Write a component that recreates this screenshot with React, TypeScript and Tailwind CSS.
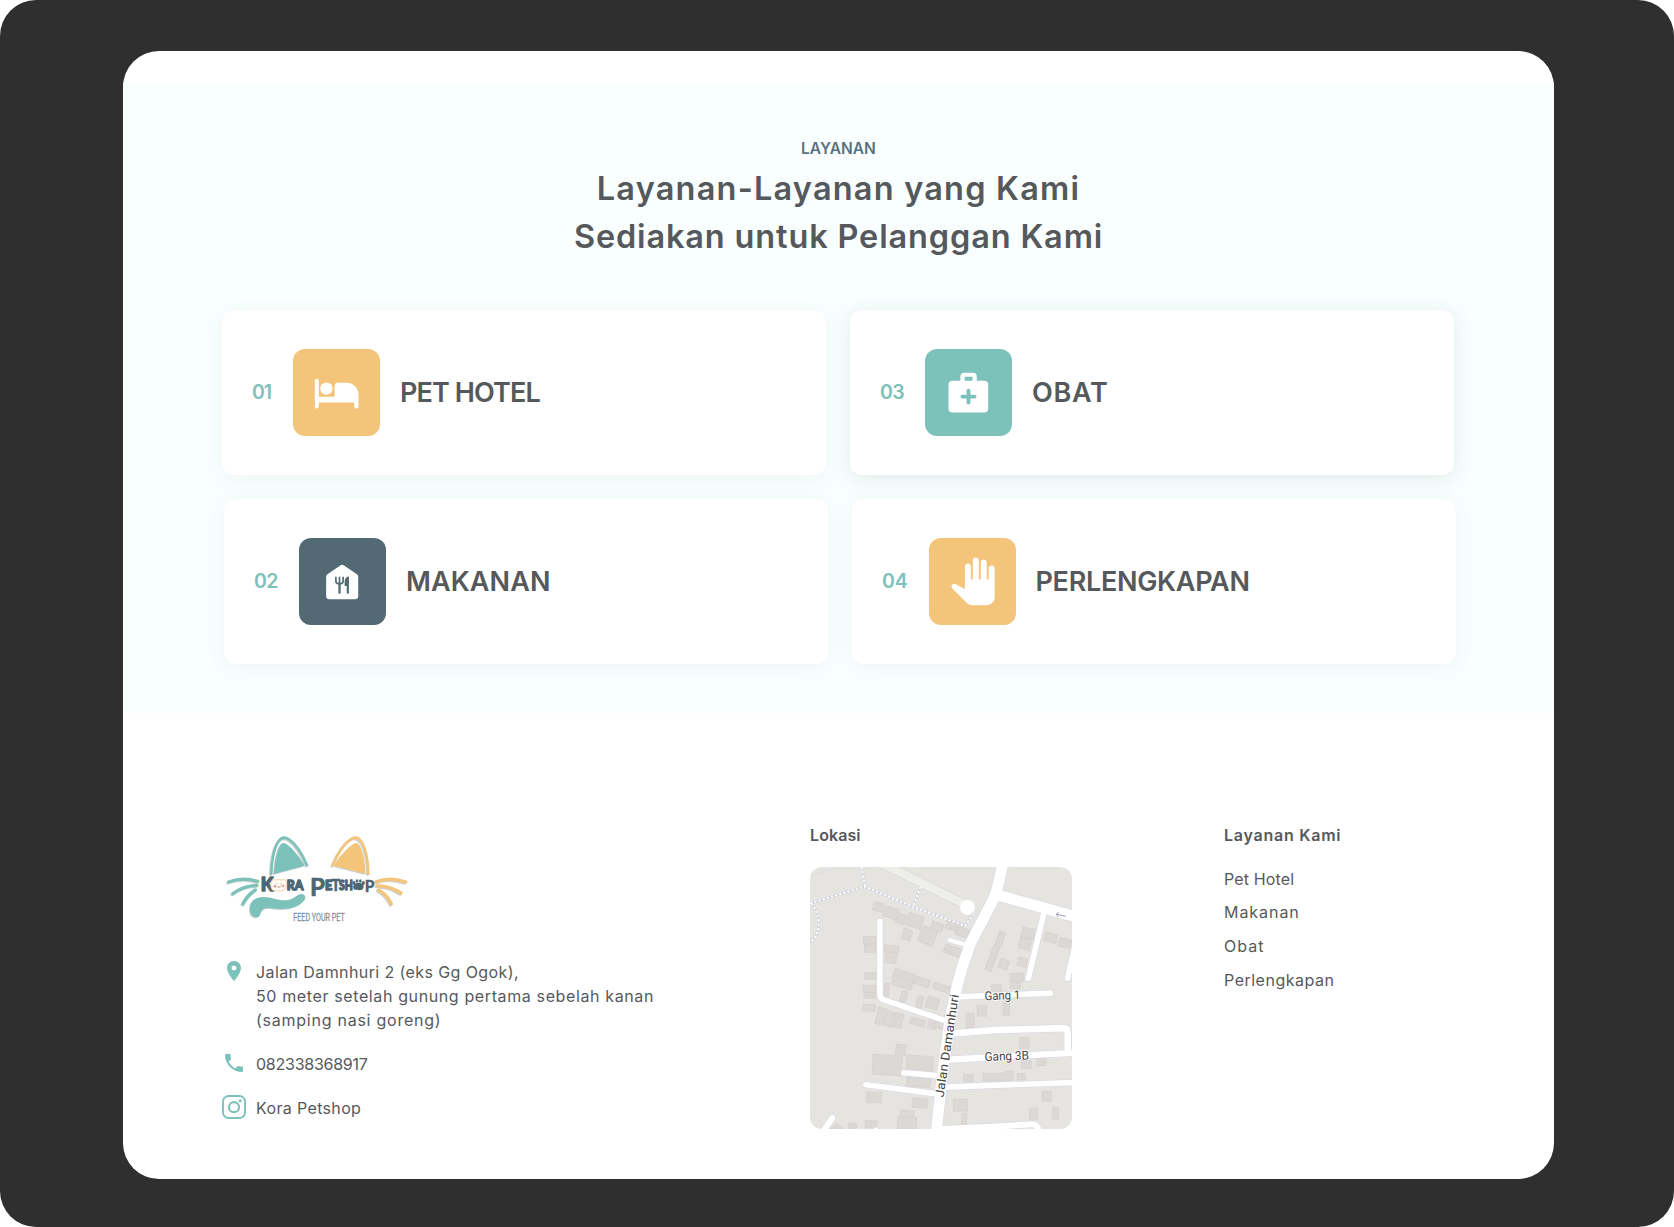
import type { ReactNode } from "react";
import { MdLocationOn, MdPhone } from "react-icons/md";

function BedIcon() {
  return (
    <svg viewBox="0 0 263 263" className="size-full fill-white">
      <circle cx="101" cy="120" r="18.5" />
      <path d="M66 96a6 6 0 0 1 12 0V144H126V112a10 10 0 0 1 10-10H162a36 36 0 0 1 36 36V174a6.5 6.5 0 0 1-13 0V162H78V174a6 6 0 0 1-12 0Z" />
    </svg>
  );
}

function MedicalIcon() {
  return (
    <svg viewBox="0 0 263 263" className="size-full">
      <path
        className="fill-white"
        fillRule="evenodd"
        d="M107 96V84a12 12 0 0 1 12-12H144.500a12 12 0 0 1 12 12V96H179a12 12 0 0 1 12 12V180a12 12 0 0 1-12 12H83a12 12 0 0 1-12-12V108a12 12 0 0 1 12-12ZM120 96H143.500V84H120Z"
      />
      <path d="M131.500 126V162M113.500 144H149.500" stroke="#7dc1bb" strokeWidth="12" strokeLinecap="round" />
    </svg>
  );
}

function FoodHouseIcon() {
  return (
    <svg viewBox="0 0 263 263" className="size-full">
      <path
        className="fill-white"
        d="M126 82.500Q130.500 79.500 135 82.500L174 109Q179 112.500 179 118V175Q179 185 169 185H92Q82 185 82 175V118Q82 112.500 87 109Z"
      />
      <g stroke="#536a75" fill="none" strokeLinecap="butt">
        <path d="M111.500 117V130Q111.500 138 119 138H126Q133.500 138 133.500 130V117M122.500 117V138" strokeWidth="5" />
        <path d="M122.500 136V168" strokeWidth="7" />
        <path d="M147.500 117V168" strokeWidth="6.500" />
      </g>
      <path d="M150 117V145H138V133Q138 118 150 117Z" fill="#536a75" />
    </svg>
  );
}

function HandIcon() {
  return (
    <svg viewBox="0 0 263 263" className="size-full fill-white">
      <path
        transform="translate(60.500 59) scale(6)"
        d="M23 5.500V20c0 2.200-1.800 4-4 4h-7.300c-1.080 0-2.100-.43-2.850-1.190L1.700 15.600c-.6-.7-.55-1.450 0-1.950.5-.45 1.100-.45 1.700-.2L8 15.910V4.500c0-.83.67-1.500 1.500-1.500S11 3.670 11 4.500v6.500h1V1.500c0-.83.67-1.500 1.500-1.500S15 .67 15 1.500V11h1V2.500c0-.83.67-1.500 1.500-1.500s1.500.67 1.500 1.500V11h1V5.500c0-.83.67-1.500 1.500-1.500s1.500.67 1.500 1.500z"
      />
    </svg>
  );
}

function InstagramIcon() {
  return (
    <svg viewBox="0 0 24 24" className="size-6 fill-none stroke-[#7dc1bb]">
      <rect x="1" y="1" width="22" height="22" rx="5.500" strokeWidth="1.900" />
      <circle cx="12" cy="12.200" r="5" strokeWidth="2.200" />
      <circle cx="18.200" cy="5.800" r="1.500" className="fill-[#7dc1bb] stroke-none" />
    </svg>
  );
}

function Logo() {
  return (
    <svg viewBox="0 0 630 345" className="h-[115px] w-[210px]">
      <defs>
        <filter id="soft" x="-10%" y="-10%" width="120%" height="120%">
          <feDropShadow dx="-3" dy="3" stdDeviation="1.500" floodColor="#8a9a9a" floodOpacity=".45" />
        </filter>
      </defs>
      <g filter="url(#soft)">
        <g stroke="#7dc1bb" strokeLinecap="round" fill="none">
          <path d="M184 161C184 125 192 84 206 64Q218 46 237 58C256 70 277 103 291 136" strokeWidth="8" />
          <path d="M56 186Q96 170 143 184" strokeWidth="10" />
          <path d="M69 221Q100 197 141 196" strokeWidth="10" />
          <path d="M99 252Q112 226 136 210" strokeWidth="10" />
        </g>
        <path d="M192 162C194 125 200 94 211 75Q218 64 230 73C251 88 271 114 284 137Z" fill="#7dc1bb" />
        <path
          d="M120 270C118 244 136 231 160 231C190 231 207 245 234 240C255 236 260 224 272 222C286 221 289 232 283 241C268 260 240 268 211 267C180 265 163 258 154 275C149 285 151 291 139 292C127 291 121 282 120 270Z"
          fill="#7dc1bb"
        />
        <g stroke="#f4c47a" strokeLinecap="round" fill="none">
          <path d="M475 161C475 125 467 84 453 64Q441 46 422 58C403 70 382 103 368 136" strokeWidth="8" />
          <path d="M500 185Q540 170 587 186" strokeWidth="10" />
          <path d="M502 197Q542 199 573 219" strokeWidth="10" />
          <path d="M506 210Q532 225 544 252" strokeWidth="10" />
        </g>
        <path d="M467 162C465 125 459 94 448 75Q441 64 429 73C408 88 385 114 372 137Z" fill="#f4c47a" />
      </g>
      <g
        fill="#4d6672"
        stroke="#4d6672"
        strokeLinejoin="round"
        strokeWidth="4"
        fontFamily="Lato, 'Liberation Sans', sans-serif"
        fontWeight="900"
      >
        <text x="152" y="214" fontSize="57" textLength="38" lengthAdjust="spacingAndGlyphs">K</text>
        <text x="230" y="209" fontSize="38" textLength="50" lengthAdjust="spacingAndGlyphs">RA</text>
        <text x="300" y="227" fontSize="76" strokeWidth="2" textLength="45" lengthAdjust="spacingAndGlyphs" fontWeight="700">P</text>
        <text x="345" y="209" fontSize="39" textLength="22" lengthAdjust="spacingAndGlyphs">E</text>
        <text x="364" y="213" fontSize="50" strokeWidth="1" textLength="27" lengthAdjust="spacingAndGlyphs">T</text>
        <text x="387" y="209" fontSize="38" textLength="41" lengthAdjust="spacingAndGlyphs">SH</text>
        <text x="464" y="216" fontSize="49" strokeWidth="1" textLength="29" lengthAdjust="spacingAndGlyphs">P</text>
      </g>
      <g fill="#4d6672">
        <path d="M446 188C457 188 464 196 460 204C457 212 451 209 446 211C441 209 433 213 430 205C427 197 436 188 446 188Z" />
        <ellipse cx="432" cy="189" rx="4.500" ry="6" />
        <ellipse cx="441" cy="183" rx="4" ry="5.500" />
        <ellipse cx="451" cy="183" rx="4" ry="5.500" />
        <ellipse cx="460" cy="189" rx="4.500" ry="6" />
      </g>
      <path
        d="M187 180Q191 176 196 180Q207 177 218 180Q225 175 228 183C232 195 229 207 221 211Q206 215 191 212C180 208 181 190 187 180Z"
        fill="#fffaf3"
        stroke="#f0c08a"
        strokeWidth="2"
      />
      <g fill="#e89a92">
        <circle cx="195" cy="199" r="4" />
        <circle cx="219" cy="198" r="4" />
      </g>
      <path d="M199 193l3-3M212 193l3-3M202 200q3 3 5 0q3 3 5 0" stroke="#8a5a4c" strokeWidth="2" fill="none" />
      <text
        x="250"
        y="303"
        fontSize="33"
        fill="#82919b"
        stroke="#82919b"
        strokeWidth=".8"
        fontFamily="Roboto, 'Liberation Sans', sans-serif"
        textLength="154"
        lengthAdjust="spacingAndGlyphs"
      >
        FEED YOUR PET
      </text>
    </svg>
  );
}

/* x, y, width, height, rotation in degrees */
const buildings: number[][] = [
  [220, 128, 30, 26, 14], [252, 142, 42, 32, 18], [290, 161, 27, 30, 18], [322, 163, 46, 40, 18],
  [308, 208, 27, 32, 18], [360, 203, 48, 50, 20], [394, 188, 36, 24, 20], [438, 188, 34, 22, 20],
  [470, 204, 36, 26, 20], [433, 260, 54, 26, 18], [190, 229, 38, 23, 0], [193, 253, 34, 24, 0],
  [254, 257, 42, 22, 6], [256, 278, 34, 32, 6], [194, 338, 34, 21, 0], [190, 376, 38, 22, 0],
  [192, 398, 36, 17, 0], [280, 334, 64, 28, 18], [276, 355, 62, 28, 18], [344, 354, 46, 24, 18],
  [400, 374, 52, 20, 18], [253, 370, 14, 40, 6], [302, 394, 18, 34, 14], [350, 409, 18, 36, 16],
  [380, 413, 36, 34, 16], [188, 434, 38, 20, 6], [230, 444, 26, 50, 14], [258, 456, 24, 44, 14],
  [284, 460, 24, 44, 12], [331, 477, 45, 20, 14], [386, 478, 24, 30, 16], [404, 488, 26, 18, 16],
  [288, 554, 30, 32, 6], [218, 586, 88, 60, 4], [320, 588, 80, 44, 4], [320, 650, 72, 32, 4],
  [200, 697, 45, 32, 3], [337, 716, 46, 28, 3], [301, 753, 42, 20, 3], [292, 772, 58, 36, 3],
  [196, 783, 34, 22, 3], [145, 791, 25, 18, 3], [592, 214, 20, 44, 20], [568, 256, 20, 78, 20],
  [598, 299, 28, 28, 24], [666, 204, 38, 32, 12], [658, 234, 36, 34, 12], [654, 294, 28, 26, 12],
  [734, 220, 38, 26, 14], [778, 236, 36, 26, 14], [632, 341, 40, 22, 2], [632, 364, 30, 22, 2],
  [576, 374, 30, 20, 0], [532, 437, 28, 32, 0], [499, 460, 24, 44, 0], [610, 425, 20, 42, 0],
  [660, 533, 28, 32, 0], [665, 602, 30, 24, 0], [711, 596, 28, 22, 0], [492, 643, 28, 24, 0],
  [550, 640, 62, 24, 0], [616, 634, 24, 30, 0], [652, 641, 26, 20, 0], [460, 718, 44, 36, 0],
  [485, 761, 15, 34, 4], [727, 695, 28, 30, 0], [689, 745, 24, 36, 0], [758, 742, 18, 38, 0],
];

const roads: [string, number][] = [
  ["M612 0L592 88Q585 110 575 130L512 250Q490 310 475 365L452 470L428 640L408 830", 33],
  ["M590 104L740 146L840 174", 33],
  ["M735 150L686 355", 17],
  ["M830 240L804 355", 17],
  ["M240 185V402Q240 415 252 420L440 484", 17],
  ["M450 241L498 254", 13],
  ["M470 411L752 400", 17],
  ["M455 521L585 511L790 505Q804 505 804 518V568", 20],
  ["M440 600L820 579", 19],
  ["M312 639L430 649", 17],
  ["M198 675L400 701", 17],
  ["M430 682L830 668", 17],
  ["M97 775L60 830", 18],
  ["M425 808L560 802L700 794Q712 794 718 815", 18],
  ["M228 810L232 820", 14],
];

function LocationMap() {
  return (
    <svg viewBox="30 21 787 787" className="size-[262px] rounded-xl bg-[#e5e4e0]">
      <path d="M20 50Q90 30 150 10" stroke="#d9d9e2" strokeWidth="2" fill="none" />
      <path d="M225 0L500 136" stroke="#d8d8dc" strokeWidth="27" />
      <path d="M225 0L500 136" stroke="#eeeeea" strokeWidth="24" />
      <ellipse cx="345" cy="15" rx="14" ry="10" fill="#eeeeea" stroke="#d9d9e2" />
      <g fill="none" stroke="#cfcfdb" strokeWidth="7">
        <path d="M30 130L195 80L340 141L495 198L524 160M185 20L195 80M362 80L340 141M34 130C64 165 64 225 30 247" />
      </g>
      <g fill="none" stroke="#fff" strokeWidth="5" strokeDasharray="8 5">
        <path d="M30 130L195 80L340 141L495 198L524 160M185 20L195 80M362 80L340 141M34 130C64 165 64 225 30 247" />
      </g>
      <g fill="#dcd8d5" stroke="#d0ccc9" strokeWidth="1.500">
        {buildings.map(([x, y, w, h, r]) => (
          <rect key={`${x}-${y}`} x={x} y={y} width={w} height={h} transform={`rotate(${r} ${x + w / 2} ${y + h / 2})`} />
        ))}
        <path d="M90 808L110 790L130 808Z" />
      </g>
      <g fill="none" strokeLinecap="round" strokeLinejoin="round">
        {roads.map(([d, w]) => (
          <path key={d} d={d} stroke="#d6d6e2" strokeWidth={w + 3} />
        ))}
        {roads.map(([d, w]) => (
          <path key={d} d={d} stroke="#fff" strokeWidth={w} />
        ))}
      </g>
      <circle cx="503" cy="142" r="22.500" fill="#fff" />
      <path d="M798 169L770 163M778 157L769 163L776 171" stroke="#8d8da6" strokeWidth="2.500" fill="none" />
      <g
        fill="#454545"
        stroke="#fff"
        strokeWidth="4"
        paintOrder="stroke"
        fontFamily="Roboto, 'Liberation Sans', sans-serif"
        fontSize="37"
      >
        <text transform="translate(555 421) rotate(-2)" textLength="107" lengthAdjust="spacingAndGlyphs">Gang 1</text>
        <text transform="translate(555 604) rotate(-2)" textLength="133" lengthAdjust="spacingAndGlyphs">Gang 3B</text>
        <text transform="translate(431 714) rotate(-81.500)" textLength="312" lengthAdjust="spacingAndGlyphs">Jalan Damanhuri</text>
      </g>
    </svg>
  );
}

type ServiceProps = {
  number: string;
  title: string;
  icon: ReactNode;
  card: string;
  label: string;
  tile: string;
  heading: string;
};

function ServiceCard({ number, title, icon, card, label, tile, heading }: ServiceProps) {
  return (
    <article className={`flex h-[165px] w-[604px] items-center rounded-xl bg-white pl-[30px] ${card}`}>
      <span className={`shrink-0 text-[19.5px] font-semibold text-[#7dc1bb] ${label}`}>{number}</span>
      <div className={`size-[87px] shrink-0 rounded-xl ${tile}`}>{icon}</div>
      <h3 className={`mt-px ml-5 text-[27px] font-semibold whitespace-nowrap text-[#56595c] ${heading}`}>{title}</h3>
    </article>
  );
}

const softShadow = "shadow-[0_4px_22px_rgba(60,90,90,0.06)]";

export default function App() {
  return (
    <div className="h-[1227px] w-[1674px] bg-white font-[Inter,'Liberation_Sans',sans-serif]">
      <div className="h-full rounded-[36px] bg-[#2f2f2f] pt-[51px] pl-[123px]">
        <main className="h-[1128px] w-[1431px] overflow-hidden rounded-[36px] bg-white pt-[31px] text-[#56595c]">
          <section className="h-[631px] bg-[#f9ffff] pt-[55px]">
            <header className="text-center">
              <p className="text-[15.5px] leading-6 font-semibold text-[#5a7180]">LAYANAN</p>
              <h2 className="mt-[3.5px] text-[32.5px] leading-[48px] font-semibold">
                <span className="block tracking-[1.2px]">Layanan-Layanan yang Kami</span>
                <span className="block tracking-[0.85px]">Sediakan untuk Pelanggan Kami</span>
              </h2>
            </header>
            <div className="mt-[49.5px] flex flex-col gap-6 pl-[99px]">
              <div className="flex gap-6">
                <ServiceCard number="01" title="PET HOTEL" icon={<BedIcon />} card={softShadow} label="w-[41px] tracking-[-1px]" tile="bg-[#f4c47a]" heading="tracking-[-0.9px]" />
                <ServiceCard number="03" title="OBAT" icon={<MedicalIcon />} card="shadow-[0_4px_20px_rgba(50,80,80,0.12)]" label="w-[45px] tracking-[-0.5px]" tile="bg-[#7dc1bb]" heading="tracking-[0.7px]" />
              </div>
              <div className="flex gap-6 pl-[2px]">
                <ServiceCard number="02" title="MAKANAN" icon={<FoodHouseIcon />} card={softShadow} label="w-[45px] tracking-[-0.5px]" tile="bg-[#536a75]" heading="tracking-[0.1px]" />
                <ServiceCard number="04" title="PERLENGKAPAN" icon={<HandIcon />} card={softShadow} label="w-[46.5px]" tile="bg-[#f4c47a]" heading="tracking-[-0.3px]" />
              </div>
            </div>
          </section>

          <footer className="flex pt-[106px] pl-[87px]">
            <div className="w-[600px] pt-px">
              <Logo />
              <ul className="mt-[25px] flex flex-col gap-5 pl-3 leading-6">
                <li className="flex gap-2.5">
                  <MdLocationOn className="-mt-px size-6 text-[#7dc1bb]" />
                  <address className="not-italic whitespace-nowrap">
                    <span className="block tracking-[0.4px]">Jalan Damnhuri 2 (eks Gg Ogok),</span>
                    <span className="block tracking-[0.62px]">50 meter setelah gunung pertama sebelah kanan</span>
                    <span className="block tracking-[0.75px]">(samping nasi goreng)</span>
                  </address>
                </li>
                <li className="flex gap-2.5">
                  <MdPhone className="-mt-px size-6 text-[#7dc1bb]" />
                  <span className="tracking-[-0.25px]">082338368917</span>
                </li>
                <li className="flex gap-2.5">
                  <span className="-mt-px">
                    <InstagramIcon />
                  </span>
                  <span className="tracking-[0.35px]">Kora Petshop</span>
                </li>
              </ul>
            </div>
            <div className="w-[414px] pt-[3.5px]">
              <h4 className="mb-[20.5px] leading-6 font-semibold tracking-[0.1px]">Lokasi</h4>
              <LocationMap />
            </div>
            <nav className="pt-[3.5px]">
              <h4 className="leading-6 font-semibold tracking-[0.75px]">Layanan Kami</h4>
              <ul className="mt-5 flex flex-col gap-[9.7px] leading-6">
                <li className="tracking-[0.15px]">Pet Hotel</li>
                <li className="tracking-[0.95px]">Makanan</li>
                <li className="tracking-[1px]">Obat</li>
                <li className="tracking-[0.5px]">Perlengkapan</li>
              </ul>
            </nav>
          </footer>
        </main>
      </div>
    </div>
  );
}
